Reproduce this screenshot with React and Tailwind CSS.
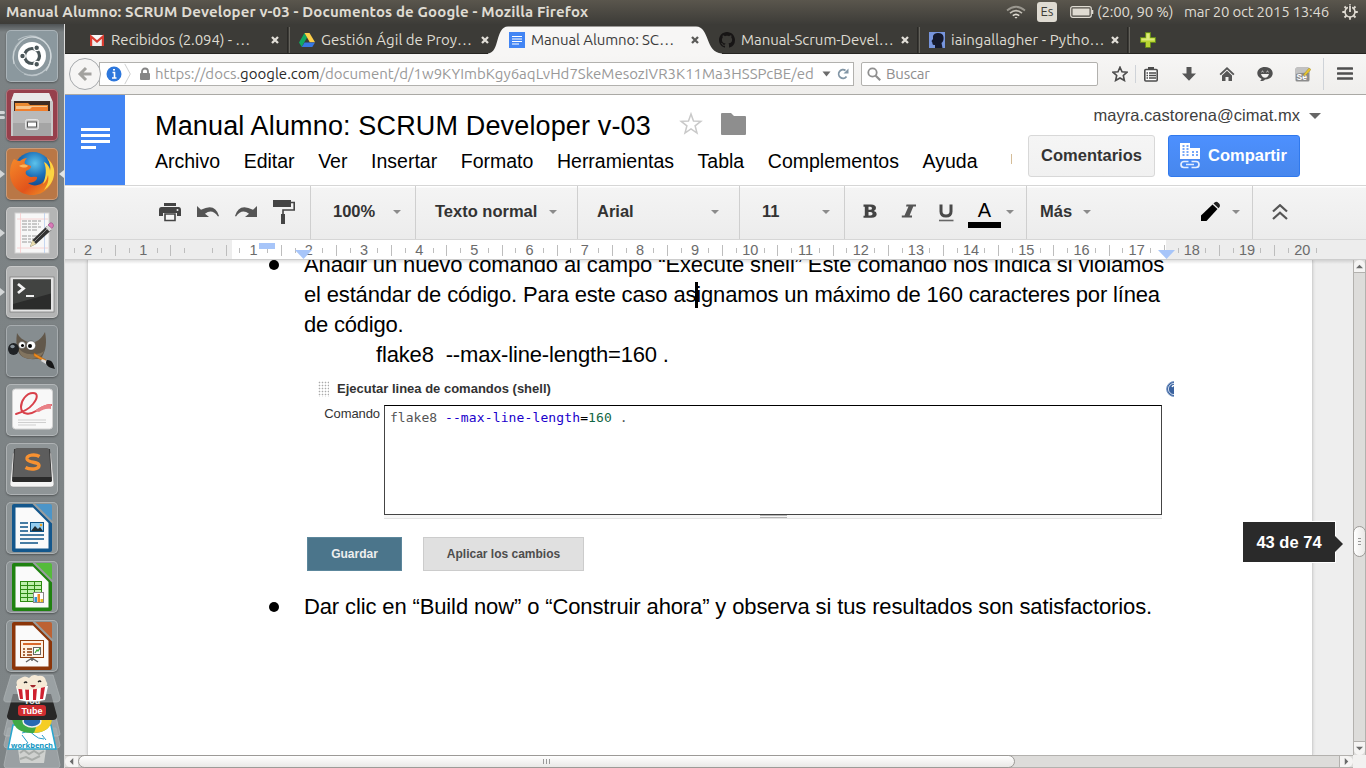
import React from "react";

const ubuntu = "font-['Ubuntu','Noto_Sans',sans-serif]";

/* ---------- Launcher ---------- */
function Dash() {
  return (
    <svg viewBox="0 0 52 52" className="h-full w-full">
      <circle cx="26" cy="26" r="19" fill="none" stroke="#c8d0d3" strokeWidth="1" opacity=".6" />
      <path d="M8 34C4 16 20 2 34 9c12 6 14 20 6 32" fill="none" stroke="#dfe5e7" strokeWidth="1.3" opacity=".7" />
      <path d="M12 10c14-10 34 0 33 17-1 14-14 22-27 17" fill="none" stroke="#d3dadd" strokeWidth="1.3" opacity=".6" />
      <circle cx="26" cy="26" r="14" fill="#fff" />
      <circle cx="26" cy="26" r="7.5" fill="none" stroke="#4a5558" strokeWidth="3.2" />
      <g fill="#4a5558" stroke="#fff" strokeWidth="1.2">
        <circle cx="16.5" cy="26" r="2.8" />
        <circle cx="30.7" cy="17.8" r="2.8" />
        <circle cx="30.7" cy="34.2" r="2.8" />
      </g>
    </svg>
  );
}
function Files() {
  return (
    <svg viewBox="0 0 52 52" className="h-full w-full">
      <path d="M8 4h35l4 9v34H5V13z" fill="#c9c9c9" />
      <path d="M8 4h35l3 8H5z" fill="#e9e9e9" />
      <path d="M8 12h36v12H8z" fill="#3e2b22" />
      <path d="M9 14h13l2 2h18v8H9z" fill="#e98a32" />
      <path d="M10 17h31v7H10z" fill="#f6c58d" />
      <path d="M9 20h15l2-2h16v6H9z" fill="#f07f2d" />
      <path d="M7 22h38v25H7z" fill="#a5a5a5" />
      <path d="M7 22h38v12H7z" fill="#b9b9b9" />
      <rect x="19.500" y="30.500" width="13" height="10" rx="2" fill="#c9c9c9" stroke="#e6e6e6" />
      <rect x="21.500" y="33" width="9" height="5" fill="#fff" stroke="#555" />
    </svg>
  );
}
function Firefox() {
  return (
    <svg viewBox="0 0 52 52" className="h-full w-full">
      <defs>
        <radialGradient id="fxb" cx=".55" cy=".3" r=".7">
          <stop offset="0" stopColor="#5cc3ec" />
          <stop offset=".5" stopColor="#1c6fb8" />
          <stop offset="1" stopColor="#123a7c" />
        </radialGradient>
        <linearGradient id="fxo" x1="0" y1="0" x2="1" y2="1">
          <stop offset="0" stopColor="#f58a2a" />
          <stop offset=".6" stopColor="#e2541b" />
          <stop offset="1" stopColor="#f2a02b" />
        </linearGradient>
      </defs>
      <circle cx="27" cy="23" r="19" fill="url(#fxb)" />
      <path d="M8 11c2 1 4 2 6 2 2-2 5-3 7-3-2 2-3 4-2 6l6 2c0 3-3 4-5 5-1 2 0 4 2 5 3 2 6 0 9 1 1 3-4 6-9 6 6 5 16 2 18-6 2-6 0-10-2-14 4 2 6 5 6 8 1-4 0-9-3-13 5 4 8 9 7 16-1 12-10 21-22 21C14 47 4 38 4 25c0-5 1-10 4-14z" fill="url(#fxo)" />
      <path d="M38 14c4 2 6 6 6 9 1-4 0-9-3-13 6 5 8 11 7 17-1 7-5 12-10 15 4-6 5-10 4-15-1 4-2 7-5 9 3-7 4-15 1-22z" fill="#fbd443" />
      <path d="M13 18c3-2 7-2 9 0-2 2-5 2-9 0z" fill="#fbb65b" />
    </svg>
  );
}
function Gedit() {
  return (
    <svg viewBox="0 0 52 52" className="h-full w-full">
      <rect x="9" y="6" width="34" height="40" fill="#f7f7f7" stroke="#d4d4d4" />
      <path d="M14.500 6v40M11 12h31M11 41h31" stroke="#f6cccc" strokeWidth=".8" />
      <path d="M38.500 6v40" stroke="#b9cdee" strokeWidth=".8" />
      <path d="M16 14h20M16 17h17M16 20h20M16 23h15M16 29h18M16 32h12M16 35h9" stroke="#999" strokeWidth="1" strokeDasharray="5 1 3 1" />
      <path d="M24 40l2.500-7L41 19l4.500 4L30 37z" fill="#333" />
      <path d="M24 40l2.500-7 3.500 4z" fill="#e8dcae" />
      <path d="M28 35l14-14" stroke="#888" />
      <path d="M39.500 20.500l3-3 4 4-3 3z" fill="#d9d9d9" />
      <path d="M42 18l2-2q3-1 3.500 3l-1.500 2.500z" fill="#d97ab7" stroke="#9b4685" strokeWidth=".6" />
    </svg>
  );
}
function Terminal() {
  return (
    <svg viewBox="0 0 52 52" className="h-full w-full">
      <rect x="4" y="11" width="44" height="35" fill="#e4e4e4" stroke="#777" strokeWidth=".7" />
      <rect x="7" y="13.500" width="38" height="30" fill="#2b2c2b" />
      <path d="M7 13.500h38v14L7 38z" fill="#414341" />
      <path d="M12 18l5.500 4.500-5.500 4.500" fill="none" stroke="#f2f2f2" strokeWidth="2.800" />
      <path d="M20 30h8" stroke="#f2f2f2" strokeWidth="2.200" />
    </svg>
  );
}
function Gimp() {
  return (
    <svg viewBox="0 0 52 52" className="h-full w-full">
      <path d="M11 8c3 5 6 7 11 9h7c5-2 8-6 10-10 2 10 1 18-3 25-5 3-13 3-19 0-5-3-8-10-6-24z" fill="#62584b" />
      <path d="M12 22c3 5 8 8 17 7 4 0 7-1 9-3-3 8-12 9-18 7-5-1-7-6-8-11z" fill="#82745f" />
      <circle cx="16" cy="20" r="3.500" fill="#fff" stroke="#444" strokeWidth=".5" />
      <circle cx="25" cy="20.500" r="4.600" fill="#fff" stroke="#444" strokeWidth=".5" />
      <circle cx="16.500" cy="20.500" r="1.500" />
      <circle cx="24" cy="21" r="2" />
      <ellipse cx="7.500" cy="24" rx="5.500" ry="6" fill="#202326" />
      <ellipse cx="6.500" cy="21.500" rx="2.200" ry="1.800" fill="#88929a" />
      <path d="M28 28l12 7-1 2-11-6z" fill="#ef8b1d" stroke="#a55b11" strokeWidth=".5" />
      <path d="M36 34l5 2-1 3-5-3z" fill="#d9d9d9" />
      <path d="M41 35c6 0 6 4 8 9-5-1-9-3-9-7z" fill="#171717" />
    </svg>
  );
}
function Evince() {
  return (
    <svg viewBox="0 0 52 52" className="h-full w-full">
      <rect x="6.500" y="5" width="40" height="40" rx="3" fill="#f8f8f8" stroke="#d2d2d2" />
      <path d="M10 30c7-2 13-5 17-10 5-6 5-11 0-11-7 0-12 8-12 14 0 8 9 8 15 4 5-3 9-6 15-6" fill="none" stroke="#d8404a" strokeWidth="2" strokeLinecap="round" />
      <path d="M29 27c5-4 10-7 16-7v5c-5-1-9 1-12 3z" fill="#e98187" />
      <path d="M12 36h28M12 38.500h28M12 41h18" stroke="#cfcfcf" />
    </svg>
  );
}
function Sublime() {
  return (
    <svg viewBox="0 0 52 52" className="h-full w-full">
      <path d="M7 10h38l3 31q0 3-3 3H7q-3 0-3-3z" fill="#f4f4f4" stroke="#888" strokeWidth=".6" />
      <path d="M8 6h36l2 32H6z" fill="#3c3c3c" />
      <path d="M9 7q0-2 2-2h30q2 0 2 2l2 28H7z" fill="#5d5d5d" />
      <path d="M6.500 34h39v5H6.500z" fill="#2a2a2a" />
      <path d="M33.500 13.500c-4-2.500-13-2-12.500 2.500 1 4.500 12 2 12 6.500 0 4-9 4.500-13.500 2" fill="none" stroke="#f79131" strokeWidth="3.400" />
    </svg>
  );
}
function OfficeDoc({ main, light, kind }) {
  return (
    <svg viewBox="0 0 52 52" className="h-full w-full">
      <path d="M6 4q0-2 2-2h22l16 16v30q0 2-2 2H8q-2 0-2-2z" fill={main} />
      <path d="M28 2h16q2 0 2 2v15z" fill={light} />
      <path d="M27 1l20 20" stroke="#999e9f" strokeWidth="2" />
      <path d="M9.500 5.500H27L42.500 21v25.500h-33z" fill="#fafafa" />
      {kind === "text" && (
        <g>
          <path d="M14 21h8M14 25h8M14 29h8M14 33h24M14 37h24M14 41h18" stroke="#0d5386" strokeWidth="1.700" />
          <rect x="24.500" y="20.500" width="13" height="9" fill="#93cdf0" stroke="#0d5386" />
          <path d="M25 29l4-5 3 3 2-2 3 4z" fill="#222f35" />
          <circle cx="35" cy="23" r="1.300" fill="#f5a623" />
        </g>
      )}
      {kind === "calc" && (
        <g>
          <rect x="14" y="20" width="22" height="21" fill="#2c8a12" />
          <path d="M15 21h6v3h-6zm7 0h6v3h-6zm7 0h6v3h-6zm-14 4h6v3h-6zm7 0h6v3h-6zm7 0h6v3h-6zm-14 4h6v3h-6zm7 0h6v3h-6zm7 0h6v3h-6zm-14 4h6v3h-6zm7 0h6v3h-6zm-7 4h6v3h-6zm7 0h6v3h-6z" fill="#bdf0ab" />
          <rect x="27.500" y="31.500" width="10" height="10" fill="#fff" stroke="#888" />
          <path d="M28.500 36h2.500v5h-2.500z" fill="#2f93d6" />
          <path d="M31.500 33h2.500v8h-2.500z" fill="#f08a24" />
          <path d="M34.500 38h2.500v3h-2.500z" fill="#e9bd1e" />
        </g>
      )}
      {kind === "show" && (
        <g>
          <rect x="14.500" y="20.500" width="23" height="17" fill="#fff0e2" stroke="#8d3b0c" />
          <path d="M17 24h18" stroke="#d9692c" strokeWidth="2" />
          <path d="M17 29h2M17 32h2M17 35h2M21 29h5M21 32h5M21 35h5" stroke="#8d3b0c" strokeWidth="1.500" />
          <rect x="27.500" y="27.500" width="7" height="7" fill="#fff" stroke="#666" />
          <path d="M29 33l2-3 1 1 2-3" fill="none" stroke="#3da339" strokeWidth="1.200" />
          <path d="M26 38l-6 4M26 38l6 4M26 38v3" stroke="#666" strokeWidth="1.500" />
        </g>
      )}
    </svg>
  );
}
function FoldedStack() {
  return (
    <svg viewBox="0 0 64 96" className="h-24 w-16 shrink-0">
      <g fill="#a6adb0" stroke="#c2c7c9" strokeWidth=".8">
        <path d="M8 72h48l4 20q0 3-3 3H7q-3 0-3-3z" opacity=".7" />
        <path d="M8 55h48l4 17q0 3-3 3H7q-3 0-3-3z" opacity=".7" />
        <path d="M8 44h48l4 17q0 2-3 2H7q-3 0-3-2z" opacity=".7" />
      </g>
      <path d="M18 76h28l-2 14H20z" fill="#cfd1cf" />
      <path d="M20 80l4-3 5 4 5-3 5 3 5-3M20 86l6-2 6 3 8-4" stroke="#a8aca9" strokeWidth="2" fill="none" />
      <path d="M13 52h38l5 24H8z" fill="#fff" stroke="#27a6cf" strokeWidth="1.500" />
      <path d="M22 60q8-3 12 2 4 4 10 4M28 70l-6-8M42 62l4 5" stroke="#2b9cc8" fill="none" />
      <text x="11" y="75" fontSize="7" fontWeight="700" fill="#1497c2" textLength="42" lengthAdjust="spacingAndGlyphs" fontFamily="Noto Sans">workbench</text>
      <path d="M12 46q20-14 40 0q-2 14-20 14q-17 0-20-14z" fill="#3faa46" />
      <path d="M34 60q17-1 18-14l-12-3z" fill="#f5cd24" />
      <ellipse cx="32" cy="48" rx="9" ry="6" fill="#2769b3" stroke="#eee" strokeWidth="1.500" />
      <path d="M13 21h38l6 22q0 4-4 4H11q-4 0-4-4z" fill="#272727" />
      <text x="32" y="31" fontSize="9" fontWeight="700" fill="#eee" textAnchor="middle" fontFamily="Liberation Sans">You</text>
      <rect x="18" y="32" width="28" height="11" rx="3" fill="#cf2d30" />
      <text x="32" y="40.500" fontSize="9" fontWeight="700" fill="#fff" textAnchor="middle" fontFamily="Liberation Sans">Tube</text>
      <path d="M11 2h42l7 23q0 4-3 4H7q-4 0-3-4z" fill="#b2b9bc" opacity=".55" stroke="#d0d5d7" strokeWidth=".8" />
      <path d="M16 13h32l-3 14q-13 3-26 0z" fill="#fff" />
      <path d="M18 14h4l1 12h-3zM25 15h4v12h-3zM33 15h4l-1 12h-3zM41 14h4l-2 12h-3z" fill="#cf2130" />
      <path d="M17 12q-2-5 4-7 4-3 8 0 4-5 9-2 7-1 8 5 3 4-1 6-13 4-26 2-4 0-2-4z" fill="#f6ead6" />
      <path d="M24 10q2-2 3 0M38 9q2-2 3 0" stroke="#222" strokeWidth="1.300" fill="none" />
      <path d="M30 12h6q-3 5-6 0z" fill="#a3262c" />
    </svg>
  );
}
const launcher = [
  { icon: <Dash />, bg: "bg-[#8b989e]" },
  { icon: <Files />, bg: "bg-[#96404c]", left: 2 },
  { icon: <Firefox />, bg: "bg-[#b97746]", left: 1, right: true },
  { icon: <Gedit />, bg: "bg-[#b4b5b5]", left: 1 },
  { icon: <Terminal />, bg: "bg-[#b3b4b4]", left: 1 },
  { icon: <Gimp />, bg: "bg-[#868d90]" },
  { icon: <Evince />, bg: "bg-[#969c9e]" },
  { icon: <Sublime />, bg: "bg-[#8f9597]" },
  { icon: <OfficeDoc main="#14578c" light="#4c95c8" kind="text" />, bg: "bg-[#8d9496]" },
  { icon: <OfficeDoc main="#1f8210" light="#55bb3b" kind="calc" />, bg: "bg-[#8d9496]" },
  { icon: <OfficeDoc main="#8b3509" light="#bd6233" kind="show" />, bg: "bg-[#8d9496]" },
];
function Launcher() {
  return (
    <aside className="flex w-[65px] shrink-0 flex-col overflow-hidden border-r border-[#dcdcdb] bg-[linear-gradient(180deg,#4e5254_0px,#7c8284_8px,#7e8486_100%)] pt-1.5">
      {launcher.map((l, i) => (
        <div key={i} className="flex h-[59px] w-16 shrink-0 items-start">
          <div className="flex h-[52px] w-1.5 shrink-0 flex-col items-start justify-center gap-0.5">
            {l.left === 2 && <><i className="h-[3px] w-[5px] rounded-r-sm bg-[#d3d6d7]" /><i className="h-[3px] w-[5px] rounded-r-sm bg-[#d3d6d7]" /></>}
            {l.left === 1 && <svg viewBox="0 0 5 8" className="h-2 w-[5px]"><path d="M0 0l5 4-5 4z" fill="#d3d6d7" /></svg>}
          </div>
          <div className={`h-[52px] w-[52px] shrink-0 overflow-hidden rounded-[5px] shadow-[inset_0_0_0_1px_rgba(255,255,255,0.28),0_1px_2px_rgba(0,0,0,0.35)] ${l.bg}`}>{l.icon}</div>
          <div className="flex h-[52px] w-1.5 items-center justify-end">
            {l.right && <svg viewBox="0 0 5 8" className="h-2 w-[5px] shrink-0"><path d="M5 0L0 4l5 4z" fill="#e3e5e5" /></svg>}
          </div>
        </div>
      ))}
      <div className="-mt-[6px] flex"><FoldedStack /></div>
    </aside>
  );
}

/* ---------- Top panel ---------- */
function Panel() {
  return (
    <header className={`flex h-6 shrink-0 items-center bg-[linear-gradient(#5a564d,#3d3c38)] pl-1.5 text-[#dfdbd2] ${ubuntu}`}>
      <div className="w-[600px] whitespace-nowrap text-[15px] font-bold tracking-[0.130px]">Manual Alumno: SCRUM Developer v-03 - Documentos de Google - Mozilla Firefox</div>
      <div className="ml-auto flex items-center pr-2">
        <svg viewBox="0 0 20 14" className="mr-[11px] h-3.5 w-5" fill="none" strokeWidth="1.700">
          <path d="M1 5.500q9-7.500 18 0" stroke="#9a978f" />
          <path d="M4 8.200q6-5 12 0" stroke="#c5c1b8" />
          <path d="M6.800 10.700q3.200-2.600 6.400 0" stroke="#dfdbd2" />
          <path d="M8.500 12l1.500 1.700 1.500-1.700z" fill="#dfdbd2" stroke="none" />
        </svg>
        <div className="mr-[13px] flex h-5 w-5 items-center justify-center rounded-[3px] bg-[#dfdbd2] text-[13px] text-[#3c3b37]">Es</div>
        <svg viewBox="0 0 24 14" className="h-3.5 w-6">
          <rect x=".7" y="1.700" width="20.600" height="10.600" rx="2" fill="none" stroke="#dfdbd2" strokeWidth="1.200" />
          <rect x="2.500" y="3.500" width="17" height="7" fill="#dfdbd2" />
          <path d="M22.500 5v4" stroke="#dfdbd2" strokeWidth="1.600" />
        </svg>
        <div className="ml-[3px] w-[77px] whitespace-nowrap text-[15px] tracking-[-0.200px]">(2:00, 90 %)</div>
        <div className="ml-2.5 w-[146px] whitespace-nowrap text-[15px] tracking-[-0.240px]">mar 20 oct 2015 13:46</div>
        <svg viewBox="0 0 16 16" className="ml-3 h-4 w-4" fill="none" stroke="#dfdbd2">
          <circle cx="8" cy="8" r="5" strokeWidth="1.600" />
          <path d="M8 .3v3M8 12.800v3M.3 8h3M12.800 8h3M2.500 2.500l2 2M11.500 11.500l2 2M2.500 13.500l2-2M11.500 4.500l2-2" strokeWidth="1.800" />
          <path d="M8 1v8" stroke="#45433e" strokeWidth="4" />
          <path d="M8 1.500v6.500" strokeWidth="1.800" />
        </svg>
      </div>
    </header>
  );
}

/* ---------- Tabs ---------- */
const GmailIco = () => (
  <svg viewBox="0 0 16 16" className="h-4 w-4">
    <path d="M1 3h14v11H1z" fill="#eee" />
    <path d="M2.100 14V4.500L8 9.500l5.900-5V14" fill="none" stroke="#d93c30" strokeWidth="2.200" />
    <path d="M3 3h10L8 7.500z" fill="#f7f7f7" />
  </svg>
);
const DriveIco = () => (
  <svg viewBox="0 0 16 16" className="h-4 w-4">
    <path d="M5.500 1L0 10.500 2.700 15 8 5.500z" fill="#11a861" />
    <path d="M5.500 1h5L16 10.300h-5.200z" fill="#ffcf48" />
    <path d="M5.500 10.500H16L13.300 15H2.800z" fill="#3777e3" />
  </svg>
);
const DocsIco = () => (
  <svg viewBox="0 0 16 16" className="h-4 w-4">
    <path d="M0 0h16v16H0z" fill="#4285f4" />
    <path d="M3 4.500h10M3 7h10M3 9.500h10M3 12h7" stroke="#fff" strokeWidth="1.200" />
  </svg>
);
const GithubIco = () => (
  <svg viewBox="0 0 16 16" className="h-4 w-4" fill="#171515">
    <path d="M8 0C3.580 0 0 3.580 0 8c0 3.540 2.290 6.530 5.470 7.590.4.070.55-.17.55-.38 0-.19-.01-.82-.01-1.490-2.010.37-2.530-.49-2.690-.94-.09-.23-.48-.94-.82-1.130-.28-.15-.68-.52-.01-.53.63-.01 1.080.58 1.230.82.72 1.210 1.870.87 2.330.66.07-.52.28-.87.51-1.070-1.780-.2-3.640-.89-3.640-3.950 0-.87.31-1.590.82-2.150-.08-.2-.36-1.020.08-2.120 0 0 .67-.21 2.200.82.64-.18 1.320-.27 2-.27s1.360.09 2 .27c1.530-1.040 2.200-.82 2.200-.82.44 1.100.16 1.920.08 2.120.51.56.82 1.270.82 2.150 0 3.070-1.870 3.750-3.650 3.950.29.25.54.73.54 1.480 0 1.070-.01 1.930-.01 2.200 0 .21.15.46.55.38A8.010 8.010 0 0016 8c0-4.420-3.580-8-8-8z" />
  </svg>
);
const AvatarIco = () => (
  <svg viewBox="0 0 16 16" className="h-4 w-4">
    <path d="M0 0h16v16H0z" fill="#7795dd" />
    <path d="M4 4q1-3 5-3 5 0 5.500 4 .5 4-2 6l1 5H6v-3q-3 0-2.500-2l-1-2L4 7z" fill="#15192c" />
  </svg>
);
const Close = ({ dark }) => (
  <svg viewBox="0 0 8 8" className="h-2 w-2 shrink-0">
    <path d="M1 1l6 6M7 1L1 7" stroke={dark ? "#5a5a58" : "#e2dfd8"} strokeWidth="2.300" />
  </svg>
);
const tabs = [
  { icon: <GmailIco />, label: "Recibidos (2.094) - …", sp: "tracking-[-0.100px]", sep: true },
  { icon: <DriveIco />, label: "Gestión Ágil de Proy…", sp: "tracking-[0.030px]" },
  { icon: <DocsIco />, label: "Manual Alumno: SC…", sp: "tracking-[-0.100px]", active: true },
  { icon: <GithubIco />, label: "Manual-Scrum-Devel…", sp: "tracking-[-0.050px]", sep: true },
  { icon: <AvatarIco />, label: "iaingallagher - Pytho…", sp: "tracking-[0.050px]", sep: true },
];
function TabBar() {
  return (
    <div className={`flex h-[30px] shrink-0 bg-[#3c3b37] pl-[15px] text-[15px] text-[#dfdbd2] shadow-[inset_0_-1px_0_#262522] ${ubuntu}`}>
      {tabs.map((t, i) => (
        <div key={i} className={`relative flex w-[210px] shrink-0 items-center pl-[9px] pt-0.5 ${t.active ? "text-[#3b3b3b]" : ""}`}>
          {t.active && (
            <svg viewBox="0 0 236 30" className="absolute -left-[12px] top-0 h-[30px] w-[236px]">
              <path d="M0 29.500C12 28.500 7 3 20 2.500H208C222 3 217 28.500 234 29.500V30H0z" fill="#f7f6f5" />
            </svg>
          )}
          <span className="relative shrink-0">{t.icon}</span>
          <span className={`relative ml-1.5 w-[155px] shrink-0 overflow-hidden whitespace-nowrap ${t.sp}`}>{t.label}</span>
          <span className="relative ml-[5px]"><Close dark={t.active} /></span>
          {t.sep && <i className="ml-auto h-[26px] w-[3px] border-x border-l-[#2a2926] border-r-[#66645d]" />}
        </div>
      ))}
      <div className="flex items-center pl-2.5 pt-0.5">
        <svg viewBox="0 0 16 16" className="h-4 w-4">
          <path d="M5.500.5h5v5h5v5h-5v5h-5v-5h-5v-5h5z" fill="#b9d431" stroke="#64881b" />
          <path d="M6.500 1.500h3v5h5v2H1.500v-2h5z" fill="#dcea7d" />
        </svg>
      </div>
    </div>
  );
}

/* ---------- Navigation bar ---------- */
function NavBar() {
  return (
    <div className={`relative flex h-[41px] shrink-0 items-center border-b border-[#aaa9a5] bg-[linear-gradient(#f7f6f5,#efeeec)] pl-[34px] text-[15px] ${ubuntu}`}>
      <svg viewBox="0 0 34 34" className="absolute left-[3px] top-[3px] z-10 h-[34px] w-[34px]">
        <circle cx="17" cy="17" r="15.500" fill="#f6f5f4" stroke="#a6a9ac" />
        <path d="M18 11L12 17l6 6M12.500 17H23.500" fill="none" stroke="#a3a29f" strokeWidth="3" />
      </svg>
      <div className="flex h-6 w-[755px] shrink-0 items-center border border-[#b2b1ae] bg-white pl-1.5">
        <svg viewBox="0 0 16 16" className="h-4 w-4 shrink-0">
          <circle cx="8" cy="8" r="7.500" fill="#2d77dc" />
          <path d="M6.500 6.500h2V12M6 12h4.500M7 3.800h2" stroke="#fff" strokeWidth="1.600" fill="none" />
        </svg>
        <svg viewBox="0 0 8 24" className="ml-0.5 h-[22px] w-2 shrink-0"><path d="M.5 1l6 11-6 11" fill="none" stroke="#c9cacb" /></svg>
        <svg viewBox="0 0 12 14" className="ml-[7px] h-3.5 w-3 shrink-0"><path d="M3 7V4.500a3 3 0 016 0V7" fill="none" stroke="#858585" strokeWidth="1.800" /><rect x="1" y="6" width="10" height="7" rx="1" fill="#858585" /></svg>
        <span className="ml-1 w-[661px] shrink-0 overflow-hidden whitespace-nowrap text-[#999] tracking-[0.010px]">https://docs.<span className="text-[#2a2a2a]">google.com</span>/document/d/1w9KYImbKgy6aqLvHd7SkeMesozIVR3K11Ma3HSSPcBE/ed</span>
        <svg viewBox="0 0 9 6" className="ml-[6px] h-1.5 w-[9px] shrink-0"><path d="M.5.5h8l-4 5z" fill="#6b6b6b" /></svg>
        <svg viewBox="0 0 12 12" className="ml-[6px] h-3 w-3 shrink-0"><path d="M9.500 8.500A4.300 4.300 0 118.500 2.500" fill="none" stroke="#8195a5" strokeWidth="1.800" /><path d="M11.500.5v5h-5z" fill="#8195a5" /></svg>
      </div>
      <div className="ml-[7px] flex h-6 w-[237px] shrink-0 items-center rounded-[2px] border border-[#b2b1ae] bg-white pl-[5px]">
        <svg viewBox="0 0 14 14" className="h-3.5 w-3.5"><circle cx="5.500" cy="5.500" r="4.200" fill="none" stroke="#8f8f8f" strokeWidth="1.800" /><path d="M8.700 8.700l4.500 4.500" stroke="#8f8f8f" strokeWidth="2.200" /></svg>
        <span className="ml-[5px] text-[#8e8e8e] tracking-[-0.200px]">Buscar</span>
      </div>
      <svg viewBox="0 0 16 16" className="ml-3.5 h-4 w-4 shrink-0"><path d="M8 1.200l2 4.500 5 .5-3.700 3.300 1.100 5L8 12l-4.400 2.500 1.100-5L1 6.200l5-.5z" fill="none" stroke="#4c4c4c" strokeWidth="1.600" /></svg>
      <i className="ml-[7px] h-[18px] w-px bg-[#cfd3d8]" />
      <svg viewBox="0 0 16 16" className="ml-[7px] h-4 w-4 shrink-0"><rect x="1.800" y="3.500" width="12.400" height="11.500" rx="1" fill="#fff" stroke="#4c4c4c" strokeWidth="1.600" /><path d="M5 1h6v3H5z" fill="#4c4c4c" /><path d="M3.500 7h1.500M6 7h7M3.500 9.500h1.500M6 9.500h7M3.500 12h1.500M6 12h7" stroke="#4c4c4c" strokeWidth="1.300" /></svg>
      <svg viewBox="0 0 16 16" className="ml-[22px] h-4 w-4 shrink-0"><path d="M5.500 1h5v6.500H15L8 14.800 1 7.500h4.500z" fill="#565656" /></svg>
      <svg viewBox="0 0 16 16" className="ml-[22px] h-4 w-4 shrink-0"><path d="M8 1l7.500 7-1.300 1.200L8 3.500 1.800 9.200.5 8z" fill="#565656" /><path d="M3 9.500l5-4.700 5 4.700V15H9.500v-4h-3v4H3z" fill="#565656" /></svg>
      <svg viewBox="0 0 16 16" className="ml-[22px] h-4 w-4 shrink-0"><path d="M8 1c4.500 0 7.700 2.700 7.700 6.300S12.500 13.500 8 13.500c-1 1.200-3 1.800-5 1.500 1-.7 1.500-1.500 1.500-2.300C2 11.700.3 9.700.3 7.300.3 3.700 3.500 1 8 1z" fill="#505050" /><path d="M4.500 6q1-1.600 2 0M9.500 6q1-1.600 2 0" stroke="#f2f1f0" fill="none" /><path d="M4 8h8q-1 3.700-4 3.700T4 8z" fill="#f2f1f0" /></svg>
      <svg viewBox="0 0 16 16" className="ml-[22px] h-4 w-4 shrink-0"><rect x=".5" y="1.500" width="14" height="14" rx="1.500" fill="#8c8c8c" /><path d="M.5 3q0-1.500 1.500-1.500h11q1.500 0 1.500 1.500v4q-7-1-14 1z" fill="#c2c2c2" /><text x="1.500" y="13.500" fontSize="8.500" fontWeight="700" fill="#fff" fontFamily="Liberation Sans">Se</text><path d="M9 8l5-6 2 1.500-5 5.500-2.500 1z" fill="#e8c62f" stroke="#8e7925" strokeWidth=".4" /></svg>
      <i className="ml-3 h-8 w-px bg-[#cfd3d8]" />
      <svg viewBox="0 0 16 16" className="ml-[13px] h-4 w-4 shrink-0"><path d="M1 2.500h14M1 7.500h14M1 12.500h14" stroke="#4f4f4f" strokeWidth="2.600" strokeLinecap="round" /></svg>
    </div>
  );
}

/* ---------- Docs header ---------- */
const Caret = ({ cls = "" }) => (
  <svg viewBox="0 0 8 4" className={`h-1 w-2 shrink-0 ${cls}`}><path d="M0 0h8L4 4z" fill="#8b8b8b" /></svg>
);
const menu = ["Archivo", "Editar", "Ver", "Insertar", "Formato", "Herramientas", "Tabla", "Complementos", "Ayuda"];
function DocsHeader() {
  return (
    <div className="flex h-[90px] shrink-0 bg-white">
      <div className="flex w-[60px] shrink-0 flex-col items-start justify-center gap-[3px] bg-[#4285f4] pb-1 pl-4">
        <i className="h-[3px] w-[29px] bg-white" />
        <i className="h-[3px] w-[29px] bg-white" />
        <i className="h-[3px] w-[29px] bg-white" />
        <i className="h-[3px] w-[15px] bg-white" />
      </div>
      <div className="flex flex-col pl-[30px] pt-3.5">
        <div className="flex h-[34px] items-center">
          <h1 className="w-[496px] whitespace-nowrap text-[27px] leading-none tracking-[0.150px]">Manual Alumno: SCRUM Developer v-03</h1>
          <svg viewBox="0 0 24 24" className="-mt-1 ml-7 h-6 w-6"><path d="M12 2l2.500 7 7.300.3-5.700 4.500L18 21 12 17 6 21l1.900-7.200L2.200 9.300 9.500 9z" fill="#fff" stroke="#c9c9c9" strokeWidth="1.500" /></svg>
          <svg viewBox="0 0 26 22" className="-mt-1 ml-[17px] h-[22px] w-[26px]"><path d="M1 1q0-1 1-1h9l3 3h11q1 0 1 1v17q0 1-1 1H2q-1 0-1-1z" fill="#8e8e8e" /></svg>
        </div>
        <nav className="mt-[7px] flex gap-[23.600px] text-[19.500px] leading-[22px]">
          {menu.map((m) => <span key={m}>{m}</span>)}
          <i className="ml-2.5 mt-1 h-2.5 w-px bg-[#d5bd98]" />
        </nav>
      </div>
      <div className="ml-auto mr-[45px] flex flex-col items-end pt-[9px]">
        <div className="flex h-[22px] items-center text-[16.500px] text-[#404040]">
          <span className="tracking-[0.040px]">mayra.castorena@cimat.mx</span>
          <svg viewBox="0 0 12 6" className="ml-[9px] mt-0.5 h-1.5 w-3"><path d="M0 0h12L6 6z" fill="#666" /></svg>
        </div>
        <div className="mr-[21px] mt-[9px] flex gap-[13px] text-[16.500px] font-bold">
          <button className="h-[42px] w-[127px] rounded-[3px] border border-[#d8d8d8] bg-[linear-gradient(#f5f5f5,#f1f1f1)] pb-px text-[#333]">Comentarios</button>
          <button className="flex h-[42px] w-[132px] items-center rounded-[3px] border border-[#3079ed] bg-[linear-gradient(#4d90fe,#4787ed)] pb-px pl-2.5 text-white">
            <svg viewBox="0 0 22 26" className="mr-[7px] h-[26px] w-[22px]">
              <path d="M1 0h10v5h10v11H1z" fill="#fff" />
              <path d="M3.500 3h2M7.500 3h2M3.500 6h2M7.500 6h2M3.500 9h2M7.500 9h2M3.500 12h2M7.500 12h2M13 9h2M17 9h2M13 12h2M17 12h2" stroke="#4a8bf5" strokeWidth="1.500" />
              <path d="M9.500 18.500H5a3 3 0 000 6h4.500M12.500 18.500H17a3 3 0 010 6h-4.500M7 21.500h8" fill="none" stroke="#e4eefe" strokeWidth="1.700" />
            </svg>
            Compartir
          </button>
        </div>
      </div>
    </div>
  );
}

/* ---------- Docs toolbar ---------- */
function Toolbar() {
  return (
    <div className="flex h-[55px] shrink-0 items-center border-y border-[#d6d6d6] bg-[linear-gradient(#fff_0px,#fff_1px,#f4f4f4_2px,#ececec_100%)] pb-0.5 pl-[94px] text-[16.500px] font-bold text-[#333]">
      <svg viewBox="0 0 22 20" className="h-5 w-[22px] shrink-0" fill="#444"><path d="M5 1h12v3H5zM2.500 5h17Q22 5 22 8v6h-4v-3H4v3H0V8q0-3 2.500-3z" /><path d="M6 12h10v6.500H6z" fill="#f6f6f6" stroke="#444" strokeWidth="1.600" /><circle cx="18.500" cy="8" r="1" fill="#eee" /></svg>
      <svg viewBox="0 0 24 14" className="ml-[15px] h-3.5 w-6 shrink-0"><path d="M1 1v11h12L9 8.800Q16 3 22 11.500l1-.5Q19-2.500 5 4.800z" fill="#555" /></svg>
      <svg viewBox="0 0 24 14" className="ml-3.5 h-3.5 w-6 shrink-0"><path d="M23 1v11H11l4-3.200Q8 3 2 11.500L1 11Q5-2.500 19 4.800z" fill="#555" /></svg>
      <svg viewBox="0 0 22 25" className="ml-[15px] h-[25px] w-[22px] shrink-0"><path d="M0 1h18v7H0zM8 15h4v10H8z" fill="#444" /><path d="M18 3.500h3.200V11H10v5" fill="none" stroke="#444" strokeWidth="1.600" /></svg>
      <div className="-mb-0.5 ml-[15px] flex w-[105px] shrink-0 items-center self-stretch border-l border-[#cfcfcf] pb-0.5 pl-[22px]"><span className="w-[60px]">100%</span><Caret /></div>
      <div className="-mb-0.5 flex w-[163px] shrink-0 items-center self-stretch border-x border-[#cfcfcf] pb-0.5 pl-[19px]"><span className="w-[114px] shrink-0 whitespace-nowrap">Texto normal</span><Caret /></div>
      <div className="-mb-0.5 flex w-[162px] shrink-0 items-center self-stretch border-r border-[#cfcfcf] pb-0.5 pl-[19px]"><span className="w-[114px]">Arial</span><Caret /></div>
      <div className="-mb-0.5 flex w-[105px] shrink-0 items-center self-stretch border-r border-[#cfcfcf] pb-0.5 pl-[22px]"><span className="w-[60px]">11</span><Caret /></div>
      <svg viewBox="0 0 14 14" className="-mt-0.5 ml-[18px] h-3.5 w-3.5 shrink-0"><path d="M.5.5H8q5 0 5 3.600Q13 6.200 10.800 7 13.700 7.700 13.700 10q0 3.700-5.200 3.700H.5v-2h1.300v-9H.5zM5.500 2.800v3h1.700Q9 5.800 9 4.300 9 2.800 7.200 2.800zM5.500 8v3.400h2Q9.600 11.400 9.600 9.700 9.600 8 7.500 8z" fill="#444" fillRule="evenodd" /></svg>
      <svg viewBox="0 0 16 14" className="-mt-0.5 ml-6 h-3.5 w-4 shrink-0"><path d="M5.500.5H15v2h-2.700L8.600 11.500H11v2H.8v-2h2.700L7.500 2.500H5z" fill="#555" /></svg>
      <svg viewBox="0 0 16 18" className="ml-[21px] mt-0.5 h-[18px] w-4 shrink-0"><path d="M3 .5v7Q3 12 8 12t5-4.500v-7" fill="none" stroke="#4a4a4a" strokeWidth="3" /><path d="M1 16.500h14.500" stroke="#666" strokeWidth="1.600" /></svg>
      <div className="ml-3.5 mt-1 flex w-[33px] flex-col items-center"><span className="text-[20px] font-normal leading-[21px] text-black">A</span><i className="mt-[1px] h-1.5 w-[33px] bg-black" /></div>
      <Caret cls="ml-[5px]" />
      <div className="-mb-0.5 ml-3 flex items-center self-stretch border-l border-[#cfcfcf] pb-0.5 pl-[13px]"><span className="w-[43px]">Más</span><Caret /></div>
      <svg viewBox="0 0 20 20" className="-mt-0.5 ml-[109px] h-5 w-5 shrink-0"><path d="M1 20v-5.500L12.500 3.500 17.500 8 6.500 20z" fill="#000" /><path d="M13.500 2.500q2.500-3 5-.5l.6.600q2 2.500-.6 4.600z" fill="#222" /></svg>
      <Caret cls="ml-3" />
      <div className="-mb-0.5 ml-3 flex items-center self-stretch border-l border-[#cfcfcf] pb-0.5 pl-[19px]"><svg viewBox="0 0 16 16" className="h-4 w-4"><path d="M1 7.500l7-6.300 7 6.300M1 15l7-6.300L15 15" fill="none" stroke="#555" strokeWidth="2.200" /></svg></div>
    </div>
  );
}

/* ---------- Ruler ---------- */
const marks = ["2", "1", "", ...Array.from({ length: 20 }, (_, i) => String(i + 1))];
function Ruler() {
  return (
    <div className="relative z-10 flex h-5 shrink-0 overflow-hidden border-b border-[#cdcdcd] bg-[linear-gradient(90deg,#ededed_167px,#fff_167px,#fff_1101px,#ededed_1101px)] text-[14.500px] leading-none text-[#6b6b6b]">
      <div className="-ml-[5px] flex items-center pt-px">
        {marks.map((m, i) => (
          <div key={i} className="flex w-[55.200px] shrink-0 items-center">
            <i className="h-[11px] w-[13.800px] border-l border-[#bdbdbd]" />
            <span className="flex h-[5px] w-[28.600px] items-center justify-center border-x border-[#bdbdbd]">{m}</span>
          </div>
        ))}
      </div>
      <i className="absolute left-[194px] top-[3px] h-1.5 w-4 bg-[#a7c5f9]" />
      <svg viewBox="0 0 17 9" className="absolute left-[230px] top-2.5 h-[9px] w-[17px]"><path d="M0 0h17L8.500 9z" fill="#a7c5f9" /></svg>
      <svg viewBox="0 0 17 9" className="absolute left-[1093px] top-2.5 h-[9px] w-[17px]"><path d="M0 0h17L8.500 9z" fill="#a7c5f9" /></svg>
    </div>
  );
}

/* ---------- Document ---------- */
const Bullet = () => <span className="flex w-[35px] shrink-0 items-center"><i className="h-2.5 w-2.5 rounded-full bg-black" /></span>;
function Shot() {
  return (
    <div className="ml-[216px] flex w-[870px] flex-col overflow-hidden pt-2.5 text-[13px] text-[#333]">
      <div className="flex h-[18px] items-center">
        <i className="ml-3.5 h-4 w-[11px] bg-[radial-gradient(circle,#aaa_0.700px,transparent_1.100px)] bg-[size:3px_3px]" />
        <b className="ml-2 whitespace-nowrap">Ejecutar linea de comandos (shell)</b>
        <svg viewBox="0 0 16 16" className="-mr-2 ml-auto h-4 w-4 shrink-0"><circle cx="8" cy="8" r="7.400" fill="#3a629f" stroke="#7f9cc6" /><circle cx="8" cy="8" r="5.600" fill="none" stroke="#dce6f5" strokeWidth=".9" /><path d="M6 6q1-2 3-1.500" stroke="#fff" fill="none" strokeWidth="1.500" /></svg>
      </div>
      <div className="mt-[7px] flex">
        <span className="w-[80px] shrink-0 pr-1 text-right leading-[17px] tracking-[-0.100px]">Comando</span>
        <div className="w-[778px]">
          <div className="h-[110px] border border-[#444] border-t-black bg-white px-[5px] pt-1 font-['DejaVu_Sans_Mono',monospace] text-[13px] leading-[15px] tracking-[0.020px] text-[#555]">
            flake8 <span className="text-[#1a00cc] tracking-[0.130px]">--max-line-length</span><span className="text-black">=</span><span className="text-[#116644] tracking-[0.130px]">160</span> .
          </div>
          <div className="flex h-1 items-center justify-center border-b border-[#e3e3e3] bg-[#f7f7f7]"><i className="h-[3px] w-[27px] border-y border-[#b5b5b5]" /></div>
        </div>
      </div>
      <div className="mt-[18px] flex pl-[3px] text-[12px] font-bold">
        <div className="flex h-[34px] w-[95px] items-center justify-center border border-[#5c879c] bg-[#4b758b] text-[#eee]">Guardar</div>
        <div className="ml-[21px] flex h-[34px] w-[161px] items-center justify-center border border-[#cccccc] bg-[#e0e0e0] text-[#4d4d4d]">Aplicar los cambios</div>
      </div>
    </div>
  );
}
function Document() {
  return (
    <div className="relative flex min-w-0 flex-1 overflow-hidden bg-[#eee] pl-[22px]">
      <div className="w-[1226px] shrink-0 border-x border-[#d3d3d3] bg-white text-[22px] leading-[30px] text-black shadow-[0_0_3px_rgba(0,0,0,0.150)]">
        <div className="-mt-2.5 flex items-start pl-[181px]">
          <span className="flex h-[30px] items-center"><Bullet /></span>
          <div className="whitespace-nowrap">
            <p className="tracking-[-0.125px]">Añadir un nuevo comando al campo “Execute shell” Este comando nos indica si violamos</p>
            <p className="tracking-[-0.160px]">el estándar de código. Para este caso as<span className="relative">i<i className="absolute -left-px top-0 h-[26px] w-[3px] bg-black" /></span>gnamos un máximo de 160 caracteres por línea</p>
            <p className="tracking-[-0.200px]">de código.</p>
            <p className="whitespace-pre pl-[72px] tracking-[-0.160px]">{"flake8  --max-line-length=160 ."}</p>
          </div>
        </div>
        <Shot />
        <div className="mt-[21px] flex pl-[181px]">
          <Bullet />
          <p className="whitespace-nowrap tracking-[-0.127px]">Dar clic en “Build now” o “Construir ahora” y observa si tus resultados son satisfactorios.</p>
        </div>
      </div>
      <div className="absolute left-0 top-0 h-1 w-full bg-[linear-gradient(rgba(0,0,0,0.120),transparent)]" />
      <div className="absolute left-[1178px] top-[262px] flex items-center">
        <div className="flex h-10 w-[92px] items-center justify-center bg-[#2a2a2a] text-[16.500px] font-bold text-white shadow-[0_0_0_1px_#fff]">43 de 74</div>
        <svg viewBox="0 0 8 16" className="mt-1 h-4 w-2"><path d="M0 0l8 8-8 8z" fill="#2a2a2a" /></svg>
      </div>
    </div>
  );
}

const Arrow = ({ d }) => <svg viewBox="0 0 8 8" className="h-[7px] w-[7px]"><path d={d} fill="#6a6a6a" /></svg>;

export default function App() {
  return (
    <div className="flex h-[768px] w-[1366px] flex-col overflow-hidden font-['Liberation_Sans',Arial,sans-serif]">
      <Panel />
      <div className="flex min-h-0 flex-1">
        <Launcher />
        <main className="flex min-w-0 flex-1 flex-col">
          <TabBar />
          <NavBar />
          <DocsHeader />
          <Toolbar />
          <Ruler />
          <div className="flex min-h-0 flex-1">
            <Document />
            <div className="flex w-[13px] shrink-0 flex-col border-x border-[#b3b1ae] bg-[#dddcda]">
              <div className="flex h-[13px] items-center justify-center rounded-t-full border-b border-[#b3b1ae] bg-[#f5f4f3]"><Arrow d="M0 6l4-4 4 4z" /></div>
              <div className="mt-[253px] -mx-px flex h-[31px] flex-col items-center justify-center gap-0.5 rounded-full border border-[#9c9a97] bg-[linear-gradient(90deg,#fff,#e9e8e6)]"><i className="h-px w-[3px] bg-[#999]" /><i className="h-px w-[3px] bg-[#999]" /><i className="h-px w-[3px] bg-[#999]" /></div>
              <div className="mt-auto flex h-[14px] items-center justify-center rounded-b-full border-t border-[#b3b1ae] bg-[#f5f4f3]"><Arrow d="M0 2l4 4 4-4z" /></div>
            </div>
          </div>
          <div className="flex h-[13px] shrink-0 bg-[#f2f1f0]">
            <div className="flex w-[1288px] flex-1 border-y border-[#b3b1ae] bg-[#dddcda]">
              <div className="flex w-[13px] items-center justify-center rounded-l-full bg-[#f5f4f3]"><Arrow d="M6 0L2 4l4 4z" /></div>
              <div className="-my-px flex w-[937px] items-center justify-center gap-0.5 rounded-full border border-[#9c9a97] bg-[linear-gradient(#fff,#e9e8e6)]"><i className="h-[5px] w-px bg-[#999]" /><i className="h-[5px] w-px bg-[#999]" /><i className="h-[5px] w-px bg-[#999]" /></div>
              <div className="ml-auto flex w-[14px] items-center justify-center rounded-r-full border-l border-[#b3b1ae] bg-[#f5f4f3]"><Arrow d="M2 0l4 4-4 4z" /></div>
            </div>
            <div className="w-[13px]" />
          </div>
        </main>
      </div>
    </div>
  );
}
